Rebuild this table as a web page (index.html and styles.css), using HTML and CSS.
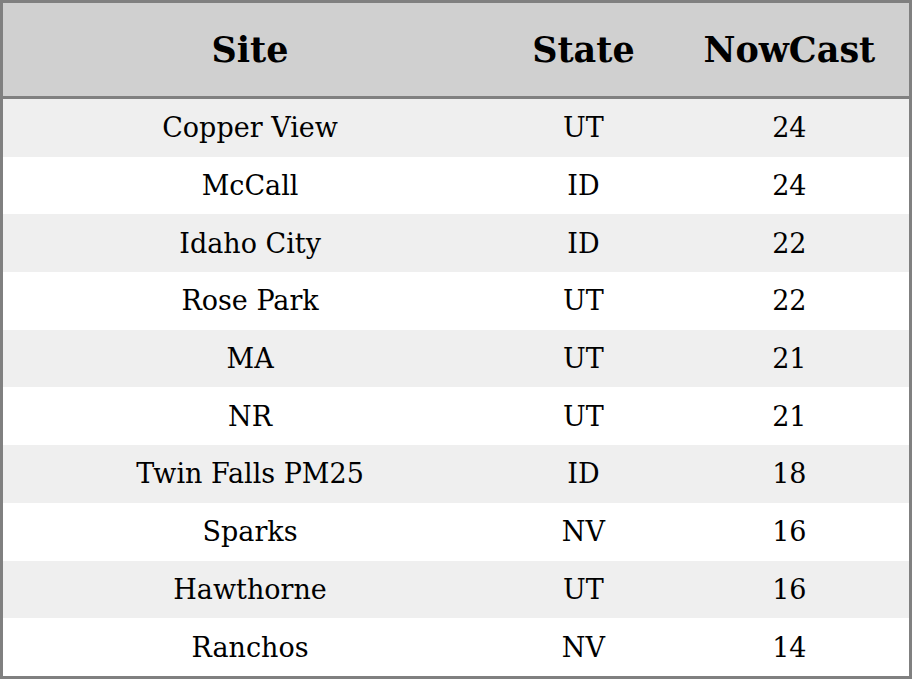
FILE: index.html
```html
<!DOCTYPE html>
<html>
<head>
<meta charset="utf-8">
<link rel="stylesheet" href="styles.css">
</head>
<body>
<table class="aq">
  <colgroup>
    <col class="c-site"><col class="c-state"><col class="c-now">
  </colgroup>
  <thead>
    <tr><th>Site</th><th>State</th><th>NowCast</th></tr>
  </thead>
  <tbody>
    <tr><td>Copper View</td><td>UT</td><td>24</td></tr>
    <tr><td>McCall</td><td>ID</td><td>24</td></tr>
    <tr><td>Idaho City</td><td>ID</td><td>22</td></tr>
    <tr><td>Rose Park</td><td>UT</td><td>22</td></tr>
    <tr><td>MA</td><td>UT</td><td>21</td></tr>
    <tr><td>NR</td><td>UT</td><td>21</td></tr>
    <tr><td>Twin Falls PM25</td><td>ID</td><td>18</td></tr>
    <tr><td>Sparks</td><td>NV</td><td>16</td></tr>
    <tr><td>Hawthorne</td><td>UT</td><td>16</td></tr>
    <tr><td>Ranchos</td><td>NV</td><td>14</td></tr>
  </tbody>
</table>
</body>
</html>
```
FILE: styles.css
```css
html, body { margin: 0; padding: 0; background: #fff; }
.aq {
  width: 912px;
  height: 679px;
  border-collapse: collapse;
  border: 3px solid #808080;
  font-family: "DejaVu Serif", serif;
  color: #000;
  table-layout: fixed;
}
.c-site { width: 494px; }
.c-state { width: 172px; }
.c-now { width: 240px; }
.aq th {
  background: #d0d0d0;
  font-size: 35px;
  font-weight: bold;
  height: 93px;
  padding: 0;
  text-align: center;
  border-bottom: 3px solid #808080;
}
.aq td {
  font-size: 27px;
  text-align: center;
  padding: 0;
  height: 57.7px;
}
.aq tbody tr:nth-child(odd) { background: #efefef; }
.aq tbody tr:nth-child(even) { background: #fff; }
```
